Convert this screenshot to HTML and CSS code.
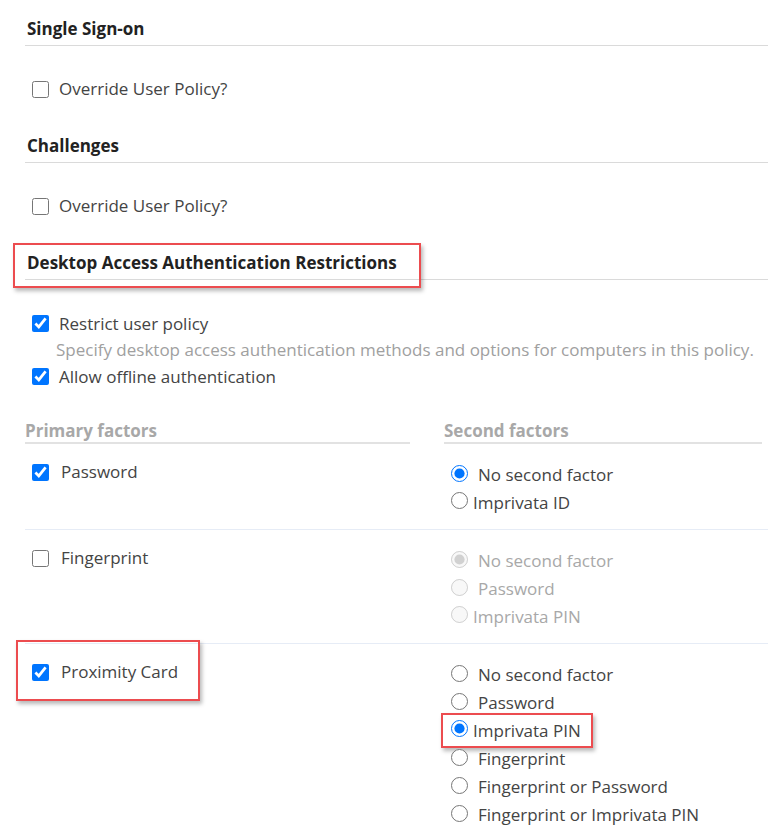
FILE: index.html
```html
<!DOCTYPE html>
<html>
<head>
<meta charset="utf-8">
<link rel="stylesheet" href="styles.css">
</head>
<body>
<div class="page">
  <h2 class="sec-head">Single Sign-on</h2>
  <label class="check-row"><input type="checkbox"><span>Override User Policy?</span></label>

  <h2 class="sec-head">Challenges</h2>
  <label class="check-row"><input type="checkbox"><span>Override User Policy?</span></label>

  <h2 class="sec-head callout-host">Desktop Access Authentication Restrictions<span class="callout callout-head"></span></h2>
  <div class="restrict">
    <label class="check-row tight"><input type="checkbox" checked><span>Restrict user policy</span></label>
    <p class="hint">Specify desktop access authentication methods and options for computers in this policy.</p>
    <label class="check-row tight"><input type="checkbox" checked><span>Allow offline authentication</span></label>
  </div>

  <div class="factors">
    <div class="col-head left">Primary factors</div>
    <div class="col-head right">Second factors</div>

    <div class="frow">
      <div class="primary"><label class="check-row fac"><input type="checkbox" checked><span>Password</span></label></div>
      <div class="second">
        <label class="radio wide"><input type="radio" name="r1" checked><span>No second factor</span></label>
        <label class="radio"><input type="radio" name="r1"><span>Imprivata ID</span></label>
      </div>
    </div>

    <div class="frow">
      <div class="primary"><label class="check-row fac"><input type="checkbox"><span>Fingerprint</span></label></div>
      <div class="second disabled">
        <label class="radio wide"><input type="radio" name="r2" checked disabled><span>No second factor</span></label>
        <label class="radio wide"><input type="radio" name="r2" disabled><span>Password</span></label>
        <label class="radio"><input type="radio" name="r2" disabled><span>Imprivata PIN</span></label>
      </div>
    </div>

    <div class="frow last">
      <div class="primary"><label class="check-row fac callout-host"><input type="checkbox" checked><span>Proximity Card</span><span class="callout callout-prox"></span></label></div>
      <div class="second">
        <label class="radio wide"><input type="radio" name="r3"><span>No second factor</span></label>
        <label class="radio wide"><input type="radio" name="r3"><span>Password</span></label>
        <label class="radio callout-host"><input type="radio" name="r3" checked><span>Imprivata PIN</span><span class="callout callout-pin"></span></label>
        <label class="radio wide"><input type="radio" name="r3"><span>Fingerprint</span></label>
        <label class="radio wide"><input type="radio" name="r3"><span>Fingerprint or Password</span></label>
        <label class="radio wide"><input type="radio" name="r3"><span>Fingerprint or Imprivata PIN</span></label>
      </div>
    </div>
  </div>
</div>
</body>
</html>
```
FILE: styles.css
```css
* { box-sizing: border-box; }
html, body { margin: 0; padding: 0; background: #fff; }
body {
  font-family: "Open Sans", "Noto Sans", "Liberation Sans", sans-serif;
  font-size: 17px;
  color: #444;
}
.page { padding: 0 0 0 25px; overflow: hidden; height: 837px; }

.sec-head {
  margin: 31px 0 0 0;
  padding: 0 0 4px 2px;
  font-size: 17px;
  font-weight: 700;
  line-height: 24px;
  color: #222;
  border-bottom: 1px solid #dadada;
}
.sec-head:first-child { margin-top: 17px; }

.check-row {
  display: flex;
  align-items: center;
  height: 28px;
  margin: 29px 0 0 7px;
  line-height: 28px;
}
.check-row input {
  margin: 0 10px 0 0;
  width: 17px;
  height: 17px;
  flex: none;
}

.restrict { padding-top: 31px; }
.check-row.tight { margin: 0 0 0 7px; height: 26px; }
.check-row.tight:last-child { height: 28px; }
.check-row.tight input { margin-top: -2px; }
.hint {
  margin: 0 0 0 31px;
  line-height: 26px;
  color: #a0a0a0;
  white-space: nowrap;
}

.factors {
  display: grid;
  grid-template-columns: 385px 1fr;
  margin-top: 29px;
}
.col-head {
  font-weight: 700;
  color: #a8a8a8;
  line-height: 22px;
  padding-bottom: 0;
  border-bottom: 2px solid #e2e2e2;
}
.col-head.right { margin-left: 34px; margin-right: 6px; }

.frow {
  grid-column: 1 / 3;
  display: grid;
  grid-template-columns: 385px 1fr;
  border-bottom: 1px solid #e6ecf6;
  margin-right: -25px;
}
.frow.last { border-bottom: none; }
.primary { padding-top: 14px; }
.check-row.fac { margin: 0 0 0 7px; }
.check-row.fac input { margin-right: 12px; }
.second { padding: 16px 0 13px 41px; }

.radio {
  display: flex;
  align-items: center;
  height: 28px;
  width: max-content;
}
.radio input {
  margin: 0 5px 0 0;
  width: 17px;
  height: 17px;
  flex: none;
  position: relative;
  top: -2px;
}
.radio.wide input { margin-right: 10px; top: -1px; }
.second.disabled { color: #a8a8a8; }

.callout-host { position: relative; }
.callout {
  position: absolute;
  border: 2px solid #ec4c4f;
  box-shadow: 2px 3px 4px rgba(0,0,0,0.28);
  pointer-events: none;
}
.callout-head { left: -12px; right: 347px; top: -8px; bottom: -9px; }
.callout-prox { left: -16px; top: -18px; width: 184px; height: 61px; }
.callout-pin { left: -10px; top: -3px; width: 152px; height: 35px; }
```
